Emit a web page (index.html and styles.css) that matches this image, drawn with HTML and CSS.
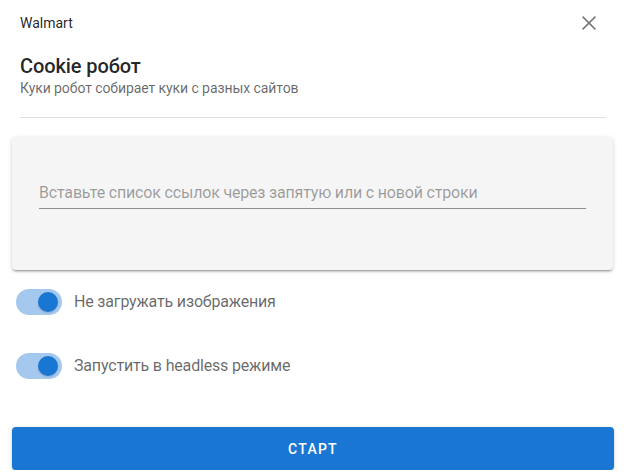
FILE: index.html
```html
<!DOCTYPE html>
<html lang="ru">
<head>
<meta charset="utf-8">
<title>Cookie робот</title>
<link rel="stylesheet" href="styles.css">
</head>
<body>
<div class="dialog">
  <header class="topbar">
    <span class="brand">Walmart</span>
    <button class="close" aria-label="Закрыть">
      <svg viewBox="0 0 24 24" width="24" height="24"><path d="M5.6 5.6L18.4 18.4M18.4 5.6L5.6 18.4"/></svg>
    </button>
  </header>
  <div class="heading">
    <h1 class="title">Cookie робот</h1>
    <p class="subtitle">Куки робот собирает куки с разных сайтов</p>
  </div>
  <hr class="divider">
  <section class="card">
    <div class="field">
      <span class="placeholder">Вставьте список ссылок через запятую или с новой строки</span>
    </div>
  </section>
  <div class="switches">
    <label class="switch-row">
      <span class="switch"><span class="track"></span><span class="thumb"></span></span>
      <span class="switch-label">Не загружать изображения</span>
    </label>
    <label class="switch-row">
      <span class="switch"><span class="track"></span><span class="thumb"></span></span>
      <span class="switch-label">Запустить в headless режиме</span>
    </label>
  </div>
  <button class="start">СТАРТ</button>
</div>
</body>
</html>
```
FILE: styles.css
```css
html, body {
  margin: 0;
  padding: 0;
  background: #ffffff;
}
body {
  font-family: Roboto, "Noto Sans", "Liberation Sans", sans-serif;
  color: rgba(0, 0, 0, 0.87);
}
.dialog {
  width: 624px;
}
.topbar {
  height: 46px;
  display: flex;
  align-items: center;
  justify-content: space-between;
  padding: 0 23px 0 20px;
}
.brand {
  font-size: 14px;
  line-height: 20px;
  color: rgba(0, 0, 0, 0.87);
}
.close {
  border: 0;
  background: none;
  padding: 0;
  margin: 0;
  width: 24px;
  height: 24px;
  display: flex;
  cursor: pointer;
}
.close svg {
  fill: none;
  stroke: #7a7a7a;
  stroke-width: 1.6;
}
.heading {
  padding: 8px 20px 0 20px;
}
.title {
  margin: 0;
  font-size: 20px;
  line-height: 24px;
  font-weight: 500;
  letter-spacing: -0.1px;
  color: rgba(0, 0, 0, 0.87);
}
.subtitle {
  margin: 0;
  font-size: 14px;
  line-height: 20px;
  letter-spacing: -0.08px;
  color: rgba(0, 0, 0, 0.6);
}
.divider {
  margin: 19px 18px 0 20px;
  border: 0;
  border-top: 1px solid rgba(0, 0, 0, 0.12);
  height: 0;
}
.card {
  margin: 19px 11px 0 12px;
  height: 133px;
  box-sizing: border-box;
  padding: 44px 27px 0 27px;
  background: #f5f5f5;
  border-radius: 4px;
  box-shadow: 0 3px 1px -2px rgba(0, 0, 0, 0.2), 0 2px 2px 0 rgba(0, 0, 0, 0.14), 0 1px 5px 0 rgba(0, 0, 0, 0.12);
}
.field {
  line-height: 24px;
  padding-bottom: 3px;
  border-bottom: 1px solid rgba(0, 0, 0, 0.42);
}
.placeholder {
  font-size: 16px;
  letter-spacing: -0.18px;
  color: rgba(0, 0, 0, 0.38);
}
.switches {
  display: flex;
  flex-direction: column;
  gap: 24px;
  margin-top: 12px;
  padding-left: 16px;
}
.switch-row {
  height: 40px;
  display: flex;
  align-items: center;
  gap: 12px;
}
.switch {
  position: relative;
  width: 46px;
  height: 26px;
  flex: none;
}
.track {
  display: block;
  width: 46px;
  height: 26px;
  border-radius: 13px;
  background: #a4c8ee;
}
.thumb {
  position: absolute;
  top: 3px;
  left: 22px;
  width: 20px;
  height: 20px;
  border-radius: 50%;
  background: #1976d2;
  box-shadow: 0 1px 2px rgba(0, 0, 0, 0.15);
}
.switch-label {
  font-size: 16px;
  line-height: 24px;
  letter-spacing: -0.17px;
  color: rgba(0, 0, 0, 0.6);
}
.start {
  display: block;
  margin: 41px 10px 0 12px;
  width: 602px;
  height: 43px;
  border: 0;
  border-radius: 4px;
  background: #1976d2;
  color: #ffffff;
  font-family: Roboto, "Noto Sans", "Liberation Sans", sans-serif;
  font-size: 14px;
  font-weight: 500;
  letter-spacing: 0.0892em;
  box-shadow: 0 3px 1px -2px rgba(0, 0, 0, 0.2), 0 2px 2px 0 rgba(0, 0, 0, 0.14), 0 1px 5px 0 rgba(0, 0, 0, 0.12);
  cursor: pointer;
}
```
